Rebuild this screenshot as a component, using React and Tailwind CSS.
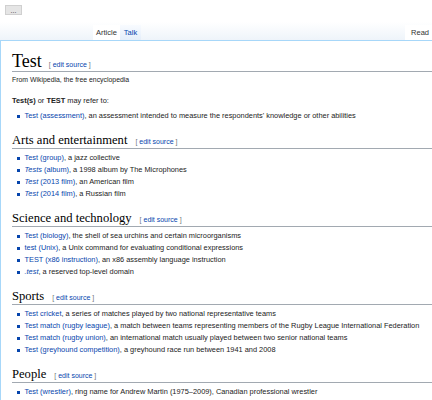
import React from "react";

const sections = [
  {
    title: "Arts and entertainment",
    items: [
      [<a key="l">Test (group)</a>, ", a jazz collective"],
      [<a key="l"><i>Tests</i> (album)</a>, ", a 1998 album by The Microphones"],
      [<a key="l"><i>Test</i> (2013 film)</a>, ", an American film"],
      [<a key="l"><i>Test</i> (2014 film)</a>, ", a Russian film"],
    ],
  },
  {
    title: "Science and technology",
    items: [
      [<a key="l">Test (biology)</a>, ", the shell of sea urchins and certain microorganisms"],
      [<a key="l">test (Unix)</a>, ", a Unix command for evaluating conditional expressions"],
      [<a key="l">TEST (x86 instruction)</a>, ", an x86 assembly language instruction"],
      [<a key="l"><i>.test</i></a>, ", a reserved top-level domain"],
    ],
  },
  {
    title: "Sports",
    items: [
      [<a key="l">Test cricket</a>, ", a series of matches played by two national representative teams"],
      [<a key="l">Test match (rugby league)</a>, ", a match between teams representing members of the Rugby League International Federation"],
      [<a key="l">Test match (rugby union)</a>, ", an international match usually played between two senior national teams"],
      [<a key="l">Test (greyhound competition)</a>, ", a greyhound race run between 1941 and 2008"],
    ],
  },
  {
    title: "People",
    items: [
      [<a key="l">Test (wrestler)</a>, ", ring name for Andrew Martin (1975–2009), Canadian professional wrestler"],
      [<a key="l">John Test</a>, " (1771–1849), American politician"],
    ],
  },
];

function EditSource({ gap }) {
  return (
    <span className={`${gap} whitespace-nowrap text-[7px] font-['Liberation_Sans',sans-serif] text-[#72777d]`}>
      [ <a className="text-[#0645ad]">edit source</a> ]
    </span>
  );
}

function Item({ children }) {
  return (
    <li className="flex items-start leading-[12px]">
      <span className="mt-[5px] mr-[5px] h-[2.5px] w-[2.5px] shrink-0 bg-[#0645ad]" />
      <span className="whitespace-nowrap">{children}</span>
    </li>
  );
}

export default function App() {
  return (
    <div className="h-[400px] w-[432px] overflow-hidden bg-white font-['Liberation_Sans',Arial,sans-serif] text-[7.4px] text-[#222]">
      {/* header */}
      <div className="h-[40px] bg-gradient-to-b from-white from-[55%] to-[#eef4fa]">
        <div className="pl-[5px] pt-[5px]">
          <button className="flex h-[10px] w-[17px] items-center justify-center border border-[#d0d0d0] bg-[#e5e5e5] text-[7px] leading-none text-[#333]">
            ...
          </button>
        </div>
        <div className="mt-[10px] flex h-[15px] items-stretch">
          <div className="ml-[93px] flex">
            <div className="flex items-center bg-white px-[3px] text-[7.5px] text-[#333]">
              Article
            </div>
            <div className="flex items-center bg-gradient-to-b from-[#f8fbff] to-[#e4eefa] px-[4px] text-[7.5px] text-[#0645ad]">
              Talk
            </div>
          </div>
          <div className="ml-auto flex items-center bg-white pl-[6px] pr-[3px] text-[7.5px] text-[#333]">
            Read
          </div>
        </div>
      </div>

      {/* content */}
      <div className="h-full border-l border-t border-[#a7d7f9] bg-white pl-[11px]">
        <div className="flex items-baseline border-b border-[#a2a9b1] pt-[10px]">
          <h1 className="font-['Liberation_Serif',serif] text-[18px] leading-[20px] text-black">Test</h1>
          <EditSource gap="ml-[7px]" />
        </div>
        <div className="mt-[3px] text-[6.9px] leading-[10px]">From Wikipedia, the free encyclopedia</div>
        <p className="mt-[10px] leading-[12px]">
          <b>Test(s)</b> or <b>TEST</b> may refer to:
        </p>
        <ul className="mt-[3px] pl-[5px] [&_a]:text-[#0645ad]">
          <Item>
            <a>Test (assessment)</a>, an assessment intended to measure the respondents' knowledge or other abilities
          </Item>
        </ul>
        {sections.map((s) => (
          <div key={s.title}>
            <div className="mt-[11px] flex items-baseline border-b border-[#a2a9b1]">
              <h2 className="font-['Liberation_Serif',serif] text-[12.6px] leading-[15px] text-black">{s.title}</h2>
              <EditSource gap="ml-[8px]" />
            </div>
            <ul className="mt-[3px] pl-[5px] [&_a]:text-[#0645ad]">
              {s.items.map((it, i) => (
                <Item key={i}>{it}</Item>
              ))}
            </ul>
          </div>
        ))}
      </div>
    </div>
  );
}
